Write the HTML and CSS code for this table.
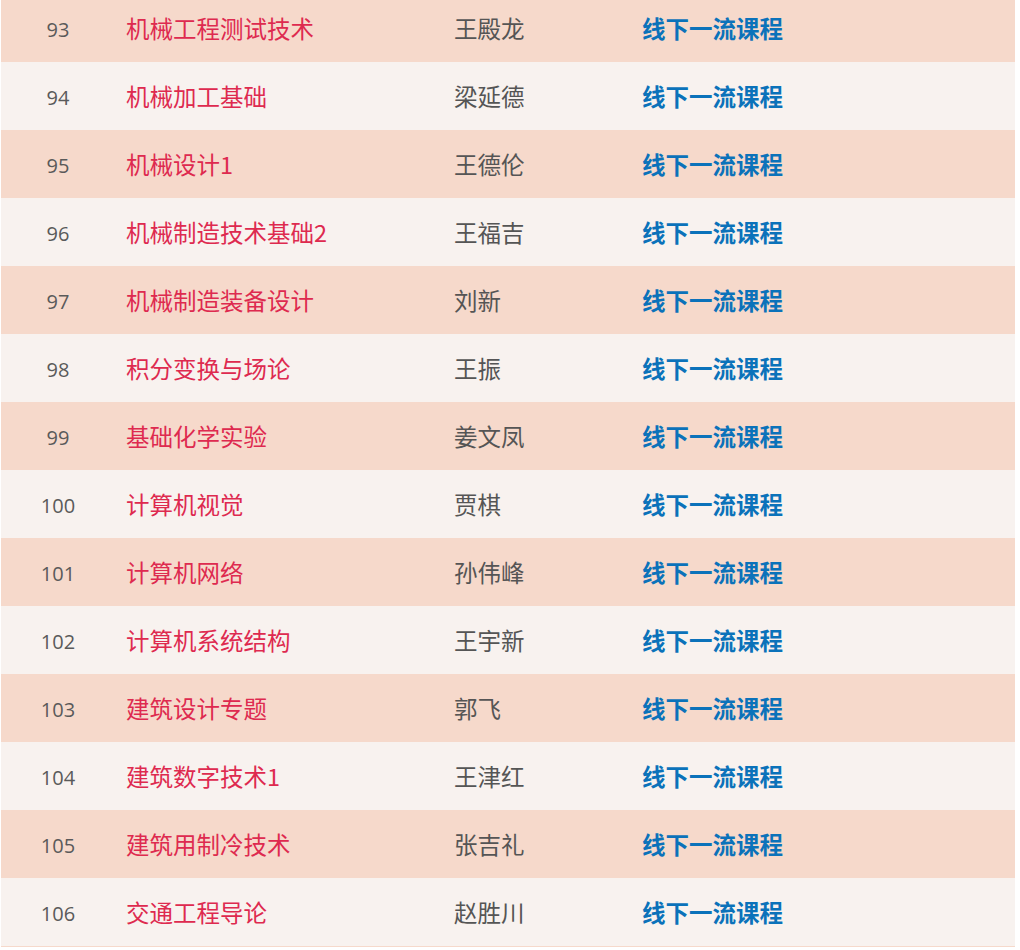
FILE: index.html
```html
<!DOCTYPE html>
<html lang="zh-CN">
<head>
<meta charset="utf-8">
<title>课程列表</title>
<link rel="stylesheet" href="styles.css">
</head>
<body>
<div class="table">
  <div class="row odd"><span class="num">93</span><span class="name">机械工程测试技术</span><span class="teacher">王殿龙</span><span class="cat">线下一流课程</span></div>
  <div class="row even"><span class="num">94</span><span class="name">机械加工基础</span><span class="teacher">梁延德</span><span class="cat">线下一流课程</span></div>
  <div class="row odd"><span class="num">95</span><span class="name">机械设计1</span><span class="teacher">王德伦</span><span class="cat">线下一流课程</span></div>
  <div class="row even"><span class="num">96</span><span class="name">机械制造技术基础2</span><span class="teacher">王福吉</span><span class="cat">线下一流课程</span></div>
  <div class="row odd"><span class="num">97</span><span class="name">机械制造装备设计</span><span class="teacher">刘新</span><span class="cat">线下一流课程</span></div>
  <div class="row even"><span class="num">98</span><span class="name">积分变换与场论</span><span class="teacher">王振</span><span class="cat">线下一流课程</span></div>
  <div class="row odd"><span class="num">99</span><span class="name">基础化学实验</span><span class="teacher">姜文凤</span><span class="cat">线下一流课程</span></div>
  <div class="row even"><span class="num">100</span><span class="name">计算机视觉</span><span class="teacher">贾棋</span><span class="cat">线下一流课程</span></div>
  <div class="row odd"><span class="num">101</span><span class="name">计算机网络</span><span class="teacher">孙伟峰</span><span class="cat">线下一流课程</span></div>
  <div class="row even"><span class="num">102</span><span class="name">计算机系统结构</span><span class="teacher">王宇新</span><span class="cat">线下一流课程</span></div>
  <div class="row odd"><span class="num">103</span><span class="name">建筑设计专题</span><span class="teacher">郭飞</span><span class="cat">线下一流课程</span></div>
  <div class="row even"><span class="num">104</span><span class="name">建筑数字技术1</span><span class="teacher">王津红</span><span class="cat">线下一流课程</span></div>
  <div class="row odd"><span class="num">105</span><span class="name">建筑用制冷技术</span><span class="teacher">张吉礼</span><span class="cat">线下一流课程</span></div>
  <div class="row even"><span class="num">106</span><span class="name">交通工程导论</span><span class="teacher">赵胜川</span><span class="cat">线下一流课程</span></div>
</div>
</body>
</html>
```
FILE: styles.css
```css
html, body {
  margin: 0;
  padding: 0;
  background: #ffffff;
}
body {
  padding: 0 5px 0 1px;
  font-family: "Noto Sans CJK SC", "Open Sans", sans-serif;
}
.table {
  margin-top: -6px;
  border-bottom: 1px solid #f6d9cb;
}
.row {
  display: grid;
  grid-template-columns: 114px 330px 187px 1fr;
  align-items: center;
  height: 68px;
}
.odd { background: #f6d9cb; }
.even { background: #f8f2ef; }
.num {
  text-align: center;
  padding-top: 2px;
  font-family: "Open Sans", sans-serif;
  font-size: 20px;
  color: #5a5a5a;
}
.name, .teacher, .cat {
  padding-left: 10px;
  font-size: 23.5px;
  line-height: 1.3;
}
.name { color: #de2a4f; padding-left: 11px; }
.teacher { color: #555555; padding-left: 9px; }
.cat { color: #0b72ba; font-weight: 700; }
```
